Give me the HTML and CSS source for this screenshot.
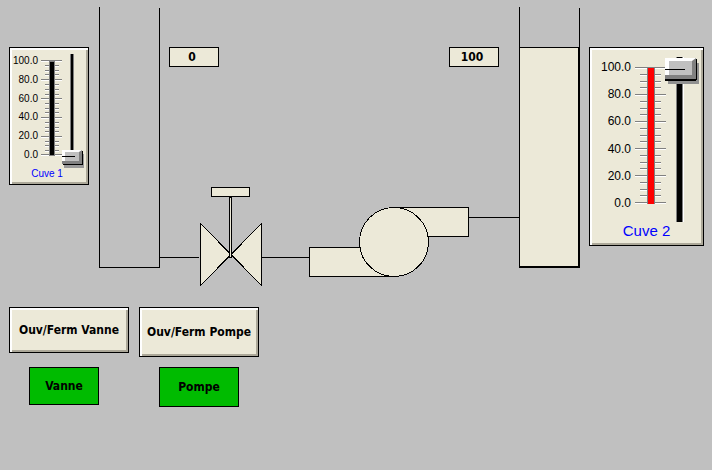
FILE: index.html
```html
<!DOCTYPE html>
<html lang="fr">
<head>
<meta charset="utf-8">
<title>Cuves</title>
<link rel="stylesheet" href="styles.css">
</head>
<body>
<main class="synoptic">
  <div class="process">
    <section class="gauge gauge-small">
      <div class="gauge-body">
        <ul class="marks"><li>100.0</li><li>80.0</li><li>60.0</li><li>40.0</li><li>20.0</li><li>0.0</li></ul>
        <svg class="scale" width="21" height="114" viewBox="0 0 21 114" aria-hidden="true">
          <path class="tick-light" d="M0 7.5h21M0 26.5h21M0 45.5h21M0 64.5h21M0 83.5h21M0 101.5h21M4 12.5h14M4 17.5h14M4 21.5h14M4 31.5h14M4 36.5h14M4 41.5h14M4 50.5h14M4 55.5h14M4 59.5h14M4 69.5h14M4 74.5h14M4 78.5h14M4 88.5h14M4 92.5h14M4 97.5h14"/>
          <path class="tick" d="M0 6.5h21M0 25.5h21M0 44.5h21M0 63.5h21M0 82.5h21M0 100.5h21M4 11.5h14M4 16.5h14M4 20.5h14M4 30.5h14M4 35.5h14M4 40.5h14M4 49.5h14M4 54.5h14M4 58.5h14M4 68.5h14M4 73.5h14M4 77.5h14M4 87.5h14M4 91.5h14M4 96.5h14"/>
          <path class="edge" d="M8 7h6v95h-6z"/>
          <path class="empty" d="M9 8h4v93h-4z"/>
        </svg>
        <input class="slider" id="cuve1" type="range" min="0" max="100" value="0">
      </div>
      <label class="caption" for="cuve1">Cuve 1</label>
    </section>

    <div class="plant">
      <svg class="piping" viewBox="0 0 480 290" aria-hidden="true">
        <path class="line" d="M.5 0V260.5H60.5V1"/>
        <path class="line" d="M61 250.5H100M163 250.5H210M370 210.5H420"/>
        <path class="part" d="M101.5 216.5V278.5L132 247.5L162.5 216.5V278.5L132 247.5z"/>
        <path class="part" d="M130.5 190.5h2v60h-2z"/>
        <path class="part" d="M112.5 180.5h38v9h-38z"/>
        <path class="part" d="M210.5 240.5h84v29h-84zM295.5 200.5h74v29h-74z"/>
        <circle class="part" cx="295" cy="235" r="34.5"/>
        <path class="liquid" d="M421 41h58v218h-58z"/>
        <path class="line" d="M420.5 0V260M420 40.5h60M480.5 1V260"/>
        <path class="wall" d="M420 260H480V40"/>
      </svg>
      <div class="readouts">
        <output class="readout" for="cuve1">0</output>
        <output class="readout" for="cuve2">100</output>
      </div>
    </div>

    <section class="gauge gauge-large">
      <div class="gauge-body">
        <ul class="marks"><li>100.0</li><li>80.0</li><li>60.0</li><li>40.0</li><li>20.0</li><li>0.0</li></ul>
        <svg class="scale" width="30" height="165" viewBox="0 0 30 165" aria-hidden="true">
          <path class="tick-light" d="M0 11.5h31M0 38.5h31M0 65.5h31M0 92.5h31M0 119.5h31M0 146.5h31M5 18.5h21M5 25.5h21M5 31.5h21M5 45.5h21M5 52.5h21M5 58.5h21M5 72.5h21M5 79.5h21M5 85.5h21M5 99.5h21M5 106.5h21M5 112.5h21M5 126.5h21M5 133.5h21M5 139.5h21"/>
          <path class="tick" d="M0 10.5h31M0 37.5h31M0 64.5h31M0 91.5h31M0 118.5h31M0 145.5h31M5 17.5h21M5 24.5h21M5 30.5h21M5 44.5h21M5 51.5h21M5 57.5h21M5 71.5h21M5 78.5h21M5 84.5h21M5 98.5h21M5 105.5h21M5 111.5h21M5 125.5h21M5 132.5h21M5 138.5h21"/>
          <path class="edge" d="M12 10h8v137h-8z"/>
          <path class="full" d="M13 11h6v136h-6z"/>
        </svg>
        <input class="slider" id="cuve2" type="range" min="0" max="100" value="100">
      </div>
      <label class="caption" for="cuve2">Cuve 2</label>
    </section>
  </div>

  <div class="commands">
    <button class="command" type="button">Ouv/Ferm Vanne</button>
    <button class="command command-tall" type="button">Ouv/Ferm Pompe</button>
    <div class="lamp">Vanne</div>
    <div class="lamp lamp-large">Pompe</div>
  </div>
</main>
</body>
</html>
```
FILE: styles.css
```css
* { box-sizing: border-box; }

body {
  margin: 0;
  background: #c0c0c0;
  color: #000;
  font-family: "DejaVu Sans Condensed", "DejaVu Sans", sans-serif;
  font-size: 12px;
  font-weight: bold;
}

.synoptic {
  display: flex;
  flex-direction: column;
  gap: 10px;
  padding: 7px 8px 7px 9px;
}

.process {
  display: flex;
  align-items: flex-start;
  gap: 10px;
}

/* Gauges */
.gauge {
  flex: none;
  margin-top: 40px;
  border: 1px solid #000;
  background: #ece9d8;
  box-shadow: inset 2px 2px #fff, inset -2px -2px #aca899;
  font-family: "Liberation Sans", Arial, sans-serif;
  font-weight: normal;
}
.gauge-small { width: 80px; padding: 6px 0 4px; }
.gauge-large { width: 115px; padding: 9px 0 5px; }

.gauge-body {
  display: flex;
  align-items: flex-start;
}

.marks {
  display: flex;
  flex-direction: column;
  justify-content: space-between;
  margin: 0;
  padding: 0;
  list-style: none;
  text-align: right;
}
.gauge-small .marks { width: 28px; height: 106px; margin: 1px 3px 0 0; font-size: 10px; line-height: 12px; }
.gauge-large .marks { width: 41px; height: 152px; margin: 2px 4px 0 0; font-size: 12px; line-height: 16px; }

.scale { display: block; overflow: visible; flex: none; shape-rendering: crispEdges; }
.tick { stroke: #808080; }
.tick-light { stroke: #fff; }
.edge { fill: #808080; }
.empty { fill: #000; }
.full { fill: #f00; }

.slider {
  appearance: none;
  writing-mode: vertical-lr;
  direction: rtl;
  flex: none;
  margin: 0;
}
.gauge-small .slider {
  width: 20px;
  height: 114px;
  padding-bottom: 4px;
  background: linear-gradient(to right, transparent 8px, #808080 8px 9px, #000 9px 11px, #808080 11px 12px, transparent 12px);
}
.gauge-large .slider {
  width: 31px;
  height: 165px;
  padding-top: 1px;
  background: linear-gradient(to right, transparent 11px, #808080 11px 12px, #000 12px 17px, #808080 17px 18px, #fff 18px 19px, transparent 19px);
}
.slider::-webkit-slider-runnable-track { background: transparent; }
.slider::-webkit-slider-thumb {
  appearance: none;
  border: solid;
  border-color: #fff #808080 #808080 #fff;
  border-radius: 0;
}
.gauge-small .slider::-webkit-slider-thumb {
  width: 20px;
  height: 14px;
  border-width: 2px 3px 3px 0;
  background: linear-gradient(#000, #000) 0 4px / 13px 1px no-repeat, linear-gradient(to right, #fff 3px, #c0c0c0 3px);
  box-shadow: 1px 1px #000, 2px 4px #999;
}
.gauge-large .slider::-webkit-slider-thumb {
  width: 31px;
  height: 21px;
  border-width: 3px 4px 4px 0;
  background: linear-gradient(#000, #000) 0 8px / 20px 1px no-repeat, linear-gradient(to right, #fff 4px, #c0c0c0 4px);
  box-shadow: 0 1px #000, 0 2px #000, 1px 1px #000, 3px 5px #909090;
}

.caption { display: block; text-align: center; color: #00f; }
.gauge-small .caption { padding-right: 4px; font-size: 10px; line-height: 12px; }
.gauge-large .caption { font-size: 15px; line-height: 18px; }

/* Tanks, valve and pump */
.plant { display: grid; flex: 1; }
.piping, .readouts { grid-area: 1 / 1; }
.piping { display: block; width: 100%; overflow: visible; shape-rendering: crispEdges; }
.line { fill: none; stroke: #000; }
.part { fill: #ece9d8; stroke: #000; }
.liquid { fill: #ece9d8; }
.wall { fill: none; stroke: #000; stroke-width: 2; }

.readouts {
  display: flex;
  justify-content: space-between;
  align-items: flex-start;
  padding: 40px 80px 0 70px;
}
.readout {
  width: 50px;
  border: 1px solid #000;
  padding-right: 4px;
  background: #ece9d8;
  text-align: center;
  line-height: 18px;
}

/* Commands and state lamps */
.commands {
  display: grid;
  grid-template-columns: 120px 120px;
  gap: 10px;
  align-items: start;
}
.command {
  height: 46px;
  padding: 0;
  border: 1px solid #000;
  border-radius: 0;
  background: #ece9d8;
  box-shadow: inset 2px 2px #fff, inset -2px -2px #aca899;
  color: #000;
  font: inherit;
  white-space: nowrap;
}
.command-tall { height: 50px; }
.lamp {
  width: 70px;
  margin-left: 20px;
  border: 1px solid #000;
  background: #00bb00;
  text-align: center;
  line-height: 36px;
}
.lamp-large { width: 80px; line-height: 38px; }
```
